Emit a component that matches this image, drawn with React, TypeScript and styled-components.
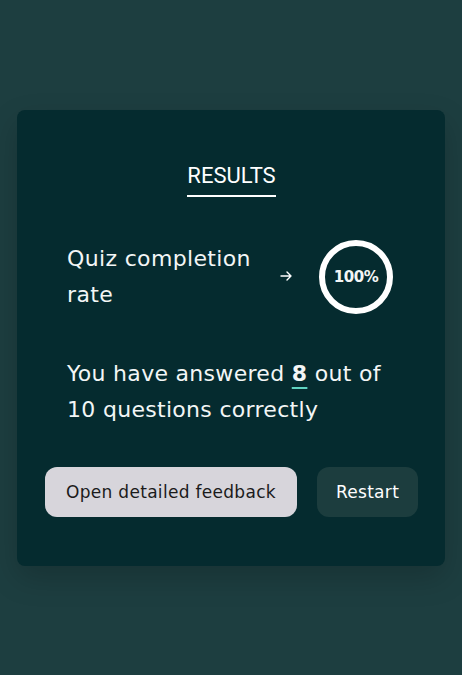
import React from "react"
import styled, {createGlobalStyle} from "styled-components"

const Global = createGlobalStyle`
  * { box-sizing: border-box; }
  html, body { margin: 0; padding: 0; }
  body {
    background: #1d3e40;
    font-family: "DejaVu Sans", "Noto Sans", sans-serif;
    color: #f3f6f6;
  }
`

const Page = styled.div`
  min-height: 100vh;
  display: flex;
  align-items: center;
  justify-content: center;
`

const Card = styled.div`
  width: 428px;
  background: #052b2f;
  border-radius: 8px;
  box-shadow: 0 12px 30px rgba(0, 0, 0, 0.18);
  padding: 52px 27px 49px 28px;
  display: flex;
  flex-direction: column;
`

const Title = styled.h2`
  align-self: center;
  margin: 0;
  font-family: Roboto, "Liberation Sans", sans-serif;
  font-weight: 400;
  font-size: 22px;
  line-height: 28px;
  padding-bottom: 5px;
  border-bottom: 2px solid #ffffff;
  color: #ffffff;
`

const RateRow = styled.div`
  margin-top: 43px;
  padding: 0 25px 0 22px;
  display: flex;
  align-items: center;
`

const Label = styled.p`
  flex: 1;
  margin: 0;
  font-size: 22px;
  line-height: 36px;
  letter-spacing: 0.35px;
`

const Arrow = styled.svg`
  width: 12px;
  height: 10px;
  margin-right: 27px;
  margin-top: -2px;
`

const Ring = styled.div`
  width: 74px;
  height: 74px;
  border-radius: 50%;
  border: 6px solid #ffffff;
  display: flex;
  align-items: center;
  justify-content: center;
  font-weight: 700;
  font-size: 15px;
  letter-spacing: -0.4px;
`

const Score = styled.p`
  margin: 42px 0 0;
  padding: 0 22px;
  max-width: 380px;
  font-size: 22px;
  line-height: 36px;
  letter-spacing: 0.3px;
`

const Count = styled.b`
  text-decoration: underline;
  text-decoration-color: #5fd3c0;
  text-decoration-thickness: 2px;
  text-underline-offset: 6px;
`

const Actions = styled.div`
  margin-top: 39px;
  display: flex;
  justify-content: space-between;
`

const Button = styled.button<{ $light?: boolean }>`
  height: 50px;
  border: none;
  border-radius: 12px;
  padding: 0;
  font-family: inherit;
  font-size: 17px;
  letter-spacing: 0.3px;
  cursor: pointer;
  background: ${p => (p.$light ? "#d7d5db" : "#1c3d3e")};
  color: ${p => (p.$light ? "#1b1b1b" : "#ffffff")};
  width: ${p => (p.$light ? "252px" : "101px")};
`

export default function App() {
  return (
    <Page>
      <Global />
      <Card>
        <Title>RESULTS</Title>
        <RateRow>
          <Label>Quiz completion rate</Label>
          <Arrow viewBox="0 0 12 10" fill="none" stroke="#ffffff" strokeWidth="1.4" strokeLinecap="round" strokeLinejoin="round">
            <path d="M1 5h10M7 1l4 4-4 4" />
          </Arrow>
          <Ring>100%</Ring>
        </RateRow>
        <Score>
          You have answered <Count>8</Count> out of 10 questions correctly
        </Score>
        <Actions>
          <Button $light>Open detailed feedback</Button>
          <Button>Restart</Button>
        </Actions>
      </Card>
    </Page>
  )
}
